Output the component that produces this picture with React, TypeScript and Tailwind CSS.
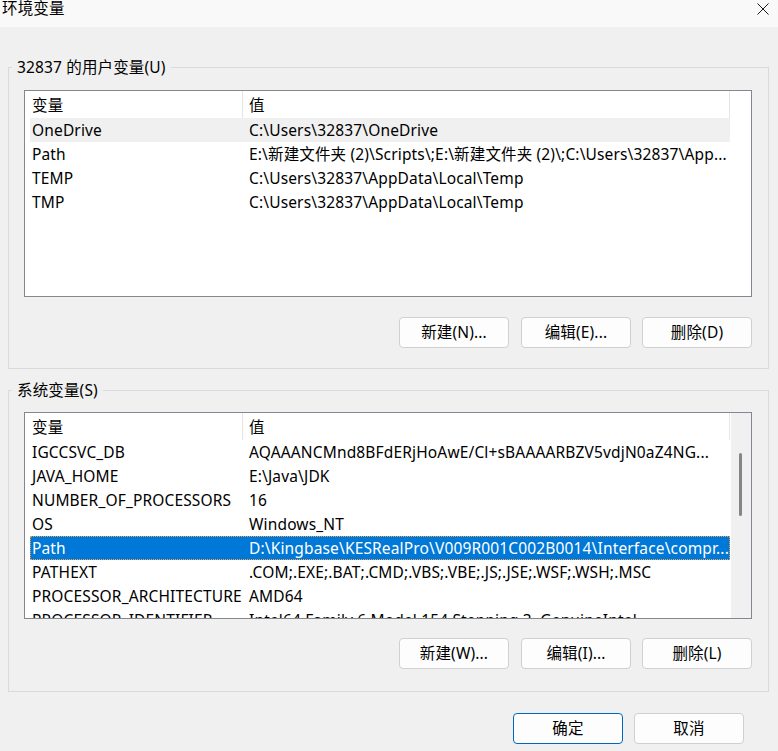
import React from "react";

type Row = { name: string; value: string; state?: "hover" | "selected" };

const userRows: Row[] = [
  { name: "OneDrive", value: "C:\\Users\\32837\\OneDrive", state: "hover" },
  { name: "Path", value: "E:\\新建文件夹 (2)\\Scripts\\;E:\\新建文件夹 (2)\\;C:\\Users\\32837\\App..." },
  { name: "TEMP", value: "C:\\Users\\32837\\AppData\\Local\\Temp" },
  { name: "TMP", value: "C:\\Users\\32837\\AppData\\Local\\Temp" },
];

const sysRows: Row[] = [
  { name: "IGCCSVC_DB", value: "AQAAANCMnd8BFdERjHoAwE/Cl+sBAAAARBZV5vdjN0aZ4NG..." },
  { name: "JAVA_HOME", value: "E:\\Java\\JDK" },
  { name: "NUMBER_OF_PROCESSORS", value: "16" },
  { name: "OS", value: "Windows_NT" },
  { name: "Path", value: "D:\\Kingbase\\KESRealPro\\V009R001C002B0014\\Interface\\compr...", state: "selected" },
  { name: "PATHEXT", value: ".COM;.EXE;.BAT;.CMD;.VBS;.VBE;.JS;.JSE;.WSF;.WSH;.MSC" },
  { name: "PROCESSOR_ARCHITECTURE", value: "AMD64" },
  { name: "PROCESSOR_IDENTIFIER", value: "Intel64 Family 6 Model 154 Stepping 3, GenuineIntel" },
];

function Header() {
  return (
    <div className="flex h-[27px] shrink-0 w-[705px] items-center">
      <div className="h-full w-[218px] border-r border-[#e5e5e5] pl-[7px] pt-[2px] flex items-center">变量</div>
      <div className="h-full w-[487px] border-r border-[#e5e5e5] pl-[6px] pt-[2px] flex items-center">值</div>
    </div>
  );
}

function ListRow({ row }: { row: Row }) {
  const base = "ml-[5px] flex h-[24px] w-[700px] shrink-0 items-center whitespace-nowrap pt-[1px]";
  if (row.state === "selected") {
    return (
      <div className={base + " bg-[#0078d7] text-white outline outline-1 outline-dotted outline-[#f0a34a] -outline-offset-1"}>
        <div className="w-[213px] pl-[2px] overflow-hidden">{row.name}</div>
        <div className="flex-1 pl-[6px] overflow-hidden">{row.value}</div>
      </div>
    );
  }
  return (
    <div className={base + (row.state === "hover" ? " bg-[#f0f0f0]" : "")}>
      <div className="w-[213px] pl-[2px] overflow-hidden">{row.name}</div>
      <div className="flex-1 pl-[6px] overflow-hidden">{row.value}</div>
    </div>
  );
}

function ListView({ rows, scroll }: { rows: Row[]; scroll?: boolean }) {
  return (
    <div className="ml-[15px] flex h-[207px] w-[728px] overflow-hidden border border-[#828790] bg-white">
      <div className="flex w-[706px] flex-col overflow-hidden">
        <Header />
        {rows.map((r, i) => (
          <ListRow key={i} row={r} />
        ))}
      </div>
      {scroll && (
        <div className="h-full w-[20px] bg-[#f0f0f0] pt-[40px]">
          <div className="ml-[8px] h-[63px] w-[3px] rounded-full bg-[#858585]" />
        </div>
      )}
    </div>
  );
}

function Btn({ label, primary, className = "" }: { label: string; primary?: boolean; className?: string }) {
  return (
    <div
      className={
        "flex h-[31px] w-[110px] items-center justify-center rounded-[4px] border bg-[#fdfdfd] " +
        (primary ? "border-[#0067c0]" : "border-[#d0d0d0]") +
        " " +
        className
      }
    >
      {label}
    </div>
  );
}

function Group({
  title,
  rows,
  scroll,
  listTop,
  btnTop,
  buttons,
}: {
  title: string;
  rows: Row[];
  scroll?: boolean;
  listTop: string;
  btnTop: string;
  buttons: string[];
}) {
  return (
    <fieldset className="ml-[8px] h-[312px] w-[761px] border border-[#dadada]">
      <legend className="ml-[3px] px-[5px] leading-[20px]">{title}</legend>
      <div className={listTop}>
        <ListView rows={rows} scroll={scroll} />
      </div>
      <div className={"flex justify-end pr-[16px] " + btnTop}>
        <Btn label={buttons[0]} className="mr-[12px]" />
        <Btn label={buttons[1]} className="mr-[11px]" />
        <Btn label={buttons[2]} />
      </div>
    </fieldset>
  );
}

export default function App() {
  return (
    <div className="h-[751px] w-[778px] overflow-hidden bg-[#f0f0f0] font-['Noto_Sans','Noto_Sans_CJK_SC',sans-serif] text-[15.5px] tracking-[0.15px] text-[#000]">
      <div className="flex h-[27px] items-start justify-between bg-[#f9f9f9]">
        <div className="pl-[2px] leading-[17px]">环境变量</div>
        <div className="pr-[9px] pt-[3px]">
          <svg width="12" height="12" viewBox="0 0 12 12">
            <path d="M0.5 0.5 L11.5 11.5 M11.5 0.5 L0.5 11.5" stroke="#1a1a1a" strokeWidth="1" fill="none" />
          </svg>
        </div>
      </div>
      <div className="mt-[30px]">
        <Group
          title="32837 的用户变量(U)"
          rows={userRows}
          listTop="mt-[13px]"
          btnTop="mt-[20px]"
          buttons={["新建(N)...", "编辑(E)...", "删除(D)"]}
        />
      </div>
      <div className="mt-[11px]">
        <Group
          title="系统变量(S)"
          rows={sysRows}
          scroll
          listTop="mt-[12px]"
          btnTop="mt-[19px]"
          buttons={["新建(W)...", "编辑(I)...", "删除(L)"]}
        />
      </div>
      <div className="mt-[21px] flex justify-end pr-[34px]">
        <Btn label="确定" primary className="mr-[11px]" />
        <Btn label="取消" />
      </div>
    </div>
  );
}
